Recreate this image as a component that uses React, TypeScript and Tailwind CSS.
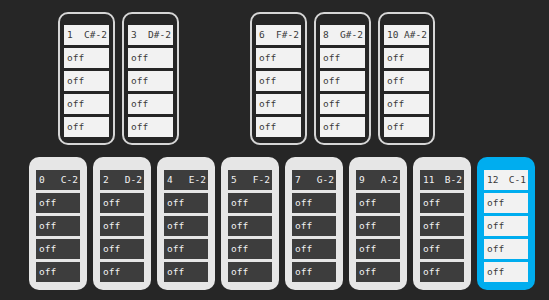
import React from 'react';

type Key = { num: number; note: string } | null;

const TOP: Key[] = [
  { num: 1, note: 'C#-2' },
  { num: 3, note: 'D#-2' },
  null,
  { num: 6, note: 'F#-2' },
  { num: 8, note: 'G#-2' },
  { num: 10, note: 'A#-2' },
];

const BOTTOM = [
  { num: 0, note: 'C-2' },
  { num: 2, note: 'D-2' },
  { num: 4, note: 'E-2' },
  { num: 5, note: 'F-2' },
  { num: 7, note: 'G-2' },
  { num: 9, note: 'A-2' },
  { num: 11, note: 'B-2' },
  { num: 12, note: 'C-1' },
];

const SLOTS = ['off', 'off', 'off', 'off'];

const Cells: React.FC<{ num: number; note: string; cell: string }> = ({ num, note, cell }) => (
  <div className="flex flex-col gap-[3px]">
    <div className={`h-[20px] flex justify-between items-center pl-[3px] pr-[2px] ${cell}`}>
      <span>{num}</span>
      <span>{note}</span>
    </div>
    {SLOTS.map((s, i) => (
      <div key={i} className={`h-[20px] flex items-center px-[3px] ${cell}`}>
        {s}
      </div>
    ))}
  </div>
);

export default function App() {
  return (
    <div
      className="w-[549px] h-[300px] bg-[#262626] overflow-hidden text-[9.5px]"
      style={{ fontFamily: '"DejaVu Sans Mono", monospace' }}
    >
      <div className="flex gap-[7px] pl-[58px] pt-[12px]">
        {TOP.map((k, i) =>
          k ? (
            <div
              key={i}
              className="w-[57px] h-[133px] border-2 border-[#d6d6d6] rounded-[10px] px-[4px] pt-[11px]"
            >
              <Cells num={k.num} note={k.note} cell="bg-[#f2f2f2] text-[#3a3a3a]" />
            </div>
          ) : (
            <div key={i} className="w-[57px]" />
          )
        )}
      </div>
      <div className="flex gap-[6px] pl-[29px] pt-[12px]">
        {BOTTOM.map((k, i) => {
          const active = i === BOTTOM.length - 1;
          return (
            <div
              key={i}
              className={`w-[58px] h-[133px] rounded-[10px] px-[7px] pt-[13px] ${
                active ? 'bg-[#00adef]' : 'bg-[#e6e6e6]'
              }`}
            >
              <Cells
                num={k.num}
                note={k.note}
                cell={active ? 'bg-[#f2f2f2] text-[#3a3a3a]' : 'bg-[#3d3d3d] text-[#f2f2f2]'}
              />
            </div>
          );
        })}
      </div>
    </div>
  );
}
